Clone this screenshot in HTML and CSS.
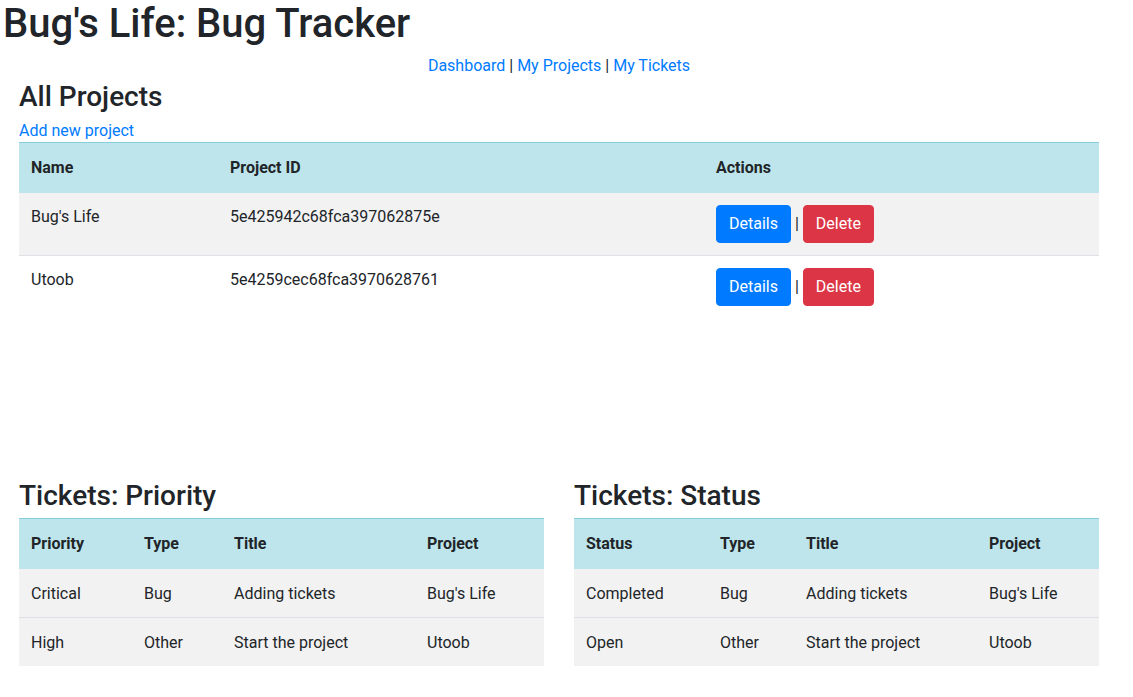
FILE: index.html
```html
<!DOCTYPE html>
<html lang="en">
<head>
<meta charset="utf-8">
<title>Bug's Life: Bug Tracker</title>
<link rel="stylesheet" href="styles.css">
</head>
<body>
<h1 class="site-title">Bug's Life: Bug Tracker</h1>
<div class="container">
  <nav class="topnav">
    <a href="#">Dashboard</a> | <a href="#">My Projects</a> | <a href="#">My Tickets</a>
  </nav>
  <section class="projects">
    <h2 class="section-title">All Projects</h2>
    <a class="add-link" href="#">Add new project</a>
    <table class="table striped">
      <thead>
        <tr><th class="c-name">Name</th><th class="c-id">Project ID</th><th>Actions</th></tr>
      </thead>
      <tbody>
        <tr>
          <td>Bug's Life</td>
          <td>5e425942c68fca397062875e</td>
          <td><a class="btn btn-primary" href="#">Details</a> | <a class="btn btn-danger" href="#">Delete</a></td>
        </tr>
        <tr>
          <td>Utoob</td>
          <td>5e4259cec68fca3970628761</td>
          <td><a class="btn btn-primary" href="#">Details</a> | <a class="btn btn-danger" href="#">Delete</a></td>
        </tr>
      </tbody>
    </table>
  </section>
  <section class="tickets">
    <div class="ticket-col">
      <h2 class="section-title">Tickets: Priority</h2>
      <table class="table grey">
        <thead>
          <tr><th class="p1">Priority</th><th class="p2">Type</th><th class="p3">Title</th><th>Project</th></tr>
        </thead>
        <tbody>
          <tr><td>Critical</td><td>Bug</td><td>Adding tickets</td><td>Bug's Life</td></tr>
          <tr><td>High</td><td>Other</td><td>Start the project</td><td>Utoob</td></tr>
        </tbody>
      </table>
    </div>
    <div class="ticket-col">
      <h2 class="section-title">Tickets: Status</h2>
      <table class="table grey">
        <thead>
          <tr><th class="s1">Status</th><th class="s2">Type</th><th class="s3">Title</th><th>Project</th></tr>
        </thead>
        <tbody>
          <tr><td>Completed</td><td>Bug</td><td>Adding tickets</td><td>Bug's Life</td></tr>
          <tr><td>Open</td><td>Other</td><td>Start the project</td><td>Utoob</td></tr>
        </tbody>
      </table>
    </div>
  </section>
</div>
</body>
</html>
```
FILE: styles.css
```css
* { box-sizing: border-box; }
body {
  margin: 0;
  font-family: Roboto, "Liberation Sans", sans-serif;
  font-size: 16px;
  line-height: 24px;
  color: #212529;
  background: #fff;
}
a { color: #007bff; text-decoration: none; }
.site-title {
  margin: 0 0 6px 0;
  padding-left: 3px;
  font-size: 40px;
  font-weight: 500;
  line-height: 48px;
}
.container {
  width: 1080px;
  margin-left: 19px;
}
.topnav {
  text-align: center;
  height: 24px;
}
.section-title {
  margin: 0 0 4px 0;
  font-size: 28px;
  font-weight: 500;
  line-height: 34px;
}
.projects { margin-top: 2px; }
.add-link { display: block; height: 24px; padding-top: 1px; }
.table {
  width: 100%;
  border-collapse: collapse;
  table-layout: fixed;
}
.table th, .table td {
  text-align: left;
  vertical-align: top;
  padding: 12px;
}
.table thead th {
  background: #bee5eb;
  font-weight: 700;
  border-top: 1px solid #86cfda;
  border-bottom: 2px solid #bee5eb;
  padding: 13px 12px 11px;
}
.table tbody td { border-top: 1px solid #dee2e6; }
.striped tbody tr:nth-child(odd) td { background: #f2f2f2; }
.grey tbody td { background: #f2f2f2; padding: 13px 12px 11px; }
.ticket-col .section-title { margin-bottom: 5px; }
.c-name { width: 199px; }
.c-id { width: 486px; }
.btn {
  display: inline-block;
  padding: 6px 12px;
  border: 1px solid transparent;
  border-radius: 4px;
  color: #fff;
  line-height: 24px;
}
.btn-primary { background: #007bff; border-color: #007bff; }
.btn-danger { background: #dc3545; border-color: #dc3545; }
.tickets {
  margin-top: 161px;
  display: grid;
  grid-template-columns: 525px 525px;
  column-gap: 30px;
}
.p1 { width: 113px; }
.p2 { width: 90px; }
.p3 { width: 193px; }
.s1 { width: 134px; }
.s2 { width: 86px; }
.s3 { width: 183px; }
```
